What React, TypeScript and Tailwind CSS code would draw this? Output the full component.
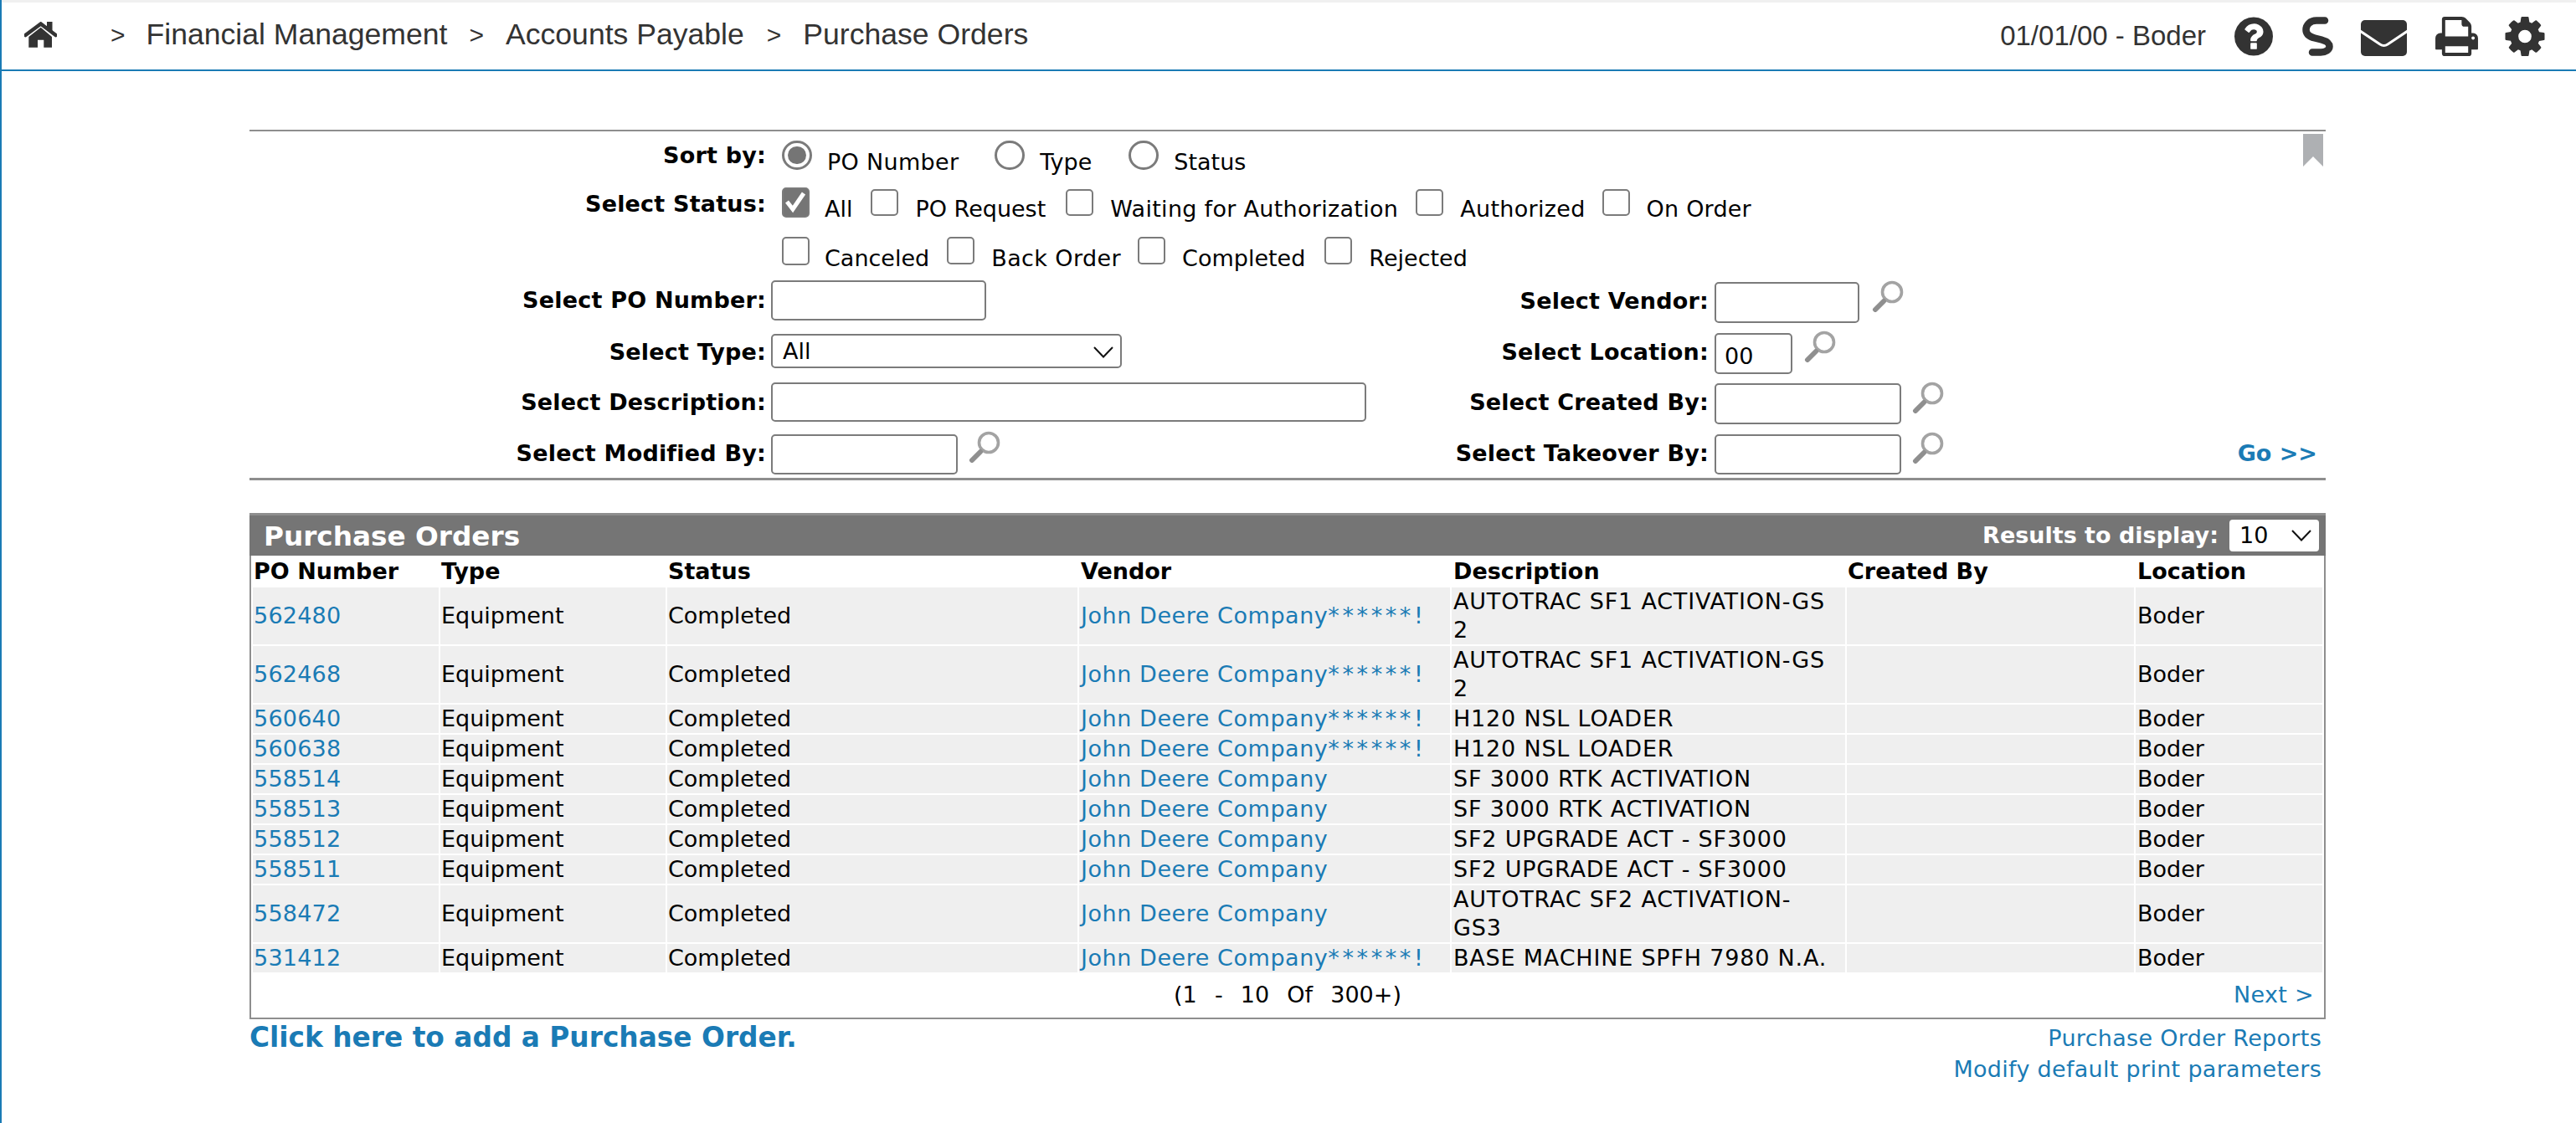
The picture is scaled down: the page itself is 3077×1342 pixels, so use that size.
import React from "react";

const HomeIcon = () => (
  <svg width="39" height="31" viewBox="0 0 39 31" fill="#333">
    <rect x="27" y="0" width="6.5" height="11" />
    <path d="M1.5 16 L19.7 2.5 L37.5 16" fill="none" stroke="#333" strokeWidth="4.5" strokeLinecap="round" />
    <path d="M19.7 6.7 L33 18 V30.7 H23.3 V21.7 H16 V30.7 H5.3 V18 Z" />
  </svg>
);
const QuestionIcon = () => (
  <svg width="46" height="47" viewBox="128 128 1536 1536" fill="#333">
    <path d="M1024 1376v-192q0-14-9-23t-23-9h-192q-14 0-23 9t-9 23v192q0 14 9 23t23 9h192q14 0 23-9t9-23zm256-672q0-88-55.5-163t-138.5-116-170-41q-243 0-371 213-15 24 8 42l132 100q7 6 19 6 16 0 25-12 53-68 86-92 34-24 86-24 48 0 85.5 26t37.5 59q0 38-20 61t-68 45q-63 28-115.5 86.5t-52.5 125.5v36q0 14 9 23t23 9h192q14 0 23-9t9-23q0-19 21.5-49.5t54.5-49.5q32-18 49-28.5t46-35 44.5-48 28-60.5 12.5-81zm384 192q0 209-103 385.5t-279.5 279.5-385.5 103-385.5-103-279.5-279.5-103-385.5 103-385.5 279.5-279.5 385.5-103 385.5 103 279.5 279.5 103 385.5z" />
  </svg>
);
const SIcon = () => (
  <svg width="37" height="47" viewBox="0 0 37 47" fill="none">
    <path d="M27 4.5 H17 C9 4.5 4.5 10 4.5 15.5 C4.5 21 9 24 15 25.5 L23 27.5 C28.5 29 32.5 31.5 32.5 35.5 C32.5 39.5 28 42.5 22 42.5 H12" stroke="#333" strokeWidth="8.5" strokeLinecap="round" />
  </svg>
);
const MailIcon = () => (
  <svg width="55" height="43" viewBox="0 0 55 43">
    <rect width="55" height="43" rx="5" fill="#333" />
    <path d="M-1 13 L23 29 Q27.5 32 32 29 L56 13" fill="none" stroke="#fff" strokeWidth="3" />
  </svg>
);
const PrintIcon = () => (
  <svg width="51" height="47" viewBox="64 128 1664 1536" fill="#333">
    <path d="M448 1536h896v-256h-896v256zm0-640h896v-384h-160q-40 0-68-28t-28-68v-160h-640v640zm1152 64q0-26-19-45t-45-19-45 19-19 45 19 45 45 19 45-19 19-45zm128 0v416q0 13-9.5 22.5t-22.5 9.5h-224v160q0 40-28 68t-68 28h-960q-40 0-68-28t-28-68v-160h-224q-13 0-22.5-9.5t-9.5-22.5v-416q0-79 56.5-135.5t135.5-56.5h64v-544q0-40 28-68t68-28h672q40 0 88 20t76 48l152 152q28 28 48 76t20 88v256h64q79 0 135.5 56.5t56.5 135.5z" />
  </svg>
);
const CogIcon = () => (
  <svg width="48" height="47" viewBox="128 128 1536 1536" fill="#333">
    <path d="M1152 896q0-106-75-181t-181-75-181 75-75 181 75 181 181 75 181-75 75-181zm512-109v222q0 12-8 23t-20 13l-185 28q-19 54-39 91 35 50 107 138 10 12 10 25t-9 23q-27 37-99 108t-94 71q-12 0-26-9l-138-108q-44 23-91 38-16 136-29 186-7 28-36 28h-222q-14 0-24.5-8.5t-11.5-21.5l-28-184q-49-16-90-37l-141 107q-10 9-25 9-14 0-25-11-126-114-165-168-7-10-7-23 0-12 8-23 15-21 51-66.5t54-70.5q-27-50-41-99l-183-27q-13-2-21-12.5t-8-23.5v-222q0-12 8-23t19-13l186-28q14-46 39-92-40-57-107-138-10-12-10-24 0-10 9-23 26-36 98.5-107.5t94.5-71.5q13 0 26 10l138 107q44-23 91-38 16-136 29-186 7-28 36-28h222q14 0 24.5 8.5t11.5 21.5l28 184q49 16 90 37l142-107q9-9 24-9 13 0 25 10 129 119 165 170 7 8 7 22 0 12-8 23-15 21-51 66.5t-54 70.5q26 50 41 98l183 28q13 2 21 12.5t8 23.5z" />
  </svg>
);
const SearchIcon = ({ className }: { className: string }) => (
  <svg width="38" height="38" viewBox="0 0 38 38" fill="none" className={`shrink-0 ${className}`}>
    <circle cx="24" cy="14" r="11.5" stroke="#a3a3a3" strokeWidth="3.6" />
    <path d="M14 25 L4 35" stroke="#8f8f8f" strokeWidth="6" strokeLinecap="round" />
  </svg>
);
const Chevron = ({ className }: { className: string }) => (
  <svg width="24" height="14" viewBox="0 0 24 14" fill="none" className={`absolute pointer-events-none ${className}`}>
    <path d="M1 1 L12 12.5 L23 1" stroke="#111" strokeWidth="2" />
  </svg>
);
const Bookmark = () => (
  <svg width="24" height="39" viewBox="0 0 24 39" className="absolute right-[3px] top-[3px]">
    <polygon points="0,0 24,0 24,39 12,27 0,39" fill="#aeb0b3" />
  </svg>
);

const inputCls = "block bg-white border-2 border-[#7b7b7b] rounded-[5px] px-[10px] outline-none shrink-0";

const Radio = ({ checked }: { checked?: boolean }) => (
  <span className="relative block w-[36px] h-[35px] shrink-0">
    <input type="radio" name="sort" defaultChecked={checked} className="block m-0 w-[36px] h-[35px] appearance-none rounded-full border-[3px] border-[#7b7b7b] bg-white" />
    {checked ? <span className="absolute left-[7px] top-[7px] w-[22px] h-[21px] rounded-full bg-[#757575]" /> : null}
  </span>
);
const Check = ({ checked, box }: { checked?: boolean; box: string }) => (
  <span className={`relative block shrink-0 ${box}`}>
    <input type="checkbox" defaultChecked={checked} className={`block m-0 w-full h-full appearance-none rounded-[5px] border-2 border-[#7b7b7b] ${checked ? "bg-[#757575]" : "bg-white"}`} />
    {checked ? (
      <svg viewBox="0 0 33 36" className="absolute inset-0 w-full h-full" fill="none">
        <path d="M6 17 L13 26 L26 7" stroke="#fff" strokeWidth="5" />
      </svg>
    ) : null}
  </span>
);
const Opt = ({ children, label, gap, first, track = "" }: { children: React.ReactNode; label: string; gap: string; first?: boolean; track?: string }) => (
  <label className={`flex items-start ${gap}`}>
    {children}
    <span className={`leading-[36px] pt-[8px] ${first ? "pl-[18px]" : "pl-[20px]"} ${track}`}>{label}</span>
  </label>
);

const rows = [
  ["562480", "John Deere Company", "******!", "AUTOTRAC SF1 ACTIVATION-GS 2"],
  ["562468", "John Deere Company", "******!", "AUTOTRAC SF1 ACTIVATION-GS 2"],
  ["560640", "John Deere Company", "******!", "H120 NSL LOADER"],
  ["560638", "John Deere Company", "******!", "H120 NSL LOADER"],
  ["558514", "John Deere Company", "", "SF 3000 RTK ACTIVATION"],
  ["558513", "John Deere Company", "", "SF 3000 RTK ACTIVATION"],
  ["558512", "John Deere Company", "", "SF2 UPGRADE ACT - SF3000"],
  ["558511", "John Deere Company", "", "SF2 UPGRADE ACT - SF3000"],
  ["558472", "John Deere Company", "", "AUTOTRAC SF2 ACTIVATION-GS3"],
  ["531412", "John Deere Company", "******!", "BASE MACHINE SPFH 7980 N.A."],
];

const cols = ["w-[222px]", "w-[269px]", "w-[490px]", "w-[443px]", "w-[470px]", "w-[343px]", "w-[223px]"];
const heads = ["PO Number", "Type", "Status", "Vendor", "Description", "Created By", "Location"];
const link = "text-[#1a7bb5]";
const td = "bg-[#efefef] p-0 align-middle font-normal";
const lbl = "font-bold text-right leading-[48px] tracking-[0.2px]";

export default function App() {
  return (
    <div className="min-h-[1342px] border-l-2 border-[#1a7bb5] bg-white text-black text-[27px] overflow-hidden font-[DejaVu_Sans,sans-serif]">
      <header className="h-[85px] -ml-[2px] border-t-[3px] border-t-[#f0f0f0] border-b-2 border-b-[#1a7bb5] flex items-center text-[#333] font-[Liberation_Sans,sans-serif]">
        <div className="ml-[29px] mb-[3px]"><HomeIcon /></div>
        <nav className="flex items-center text-[35.6px] ml-[64px] mb-[3px]">
          <span className="text-[30px]">&gt;</span>
          <span className="ml-[25px]">Financial Management</span>
          <span className="ml-[26px] text-[30px]">&gt;</span>
          <span className="ml-[26px]">Accounts Payable</span>
          <span className="ml-[27px] text-[30px]">&gt;</span>
          <span className="ml-[26px]">Purchase Orders</span>
        </nav>
        <div className="ml-auto flex items-center pr-[37px]">
          <span className="text-[33px] mr-[34px]">01/01/00 - Boder</span>
          <QuestionIcon />
          <div className="ml-[35px]"><SIcon /></div>
          <div className="ml-[33px] mt-[4px]"><MailIcon /></div>
          <div className="ml-[34px]"><PrintIcon /></div>
          <div className="ml-[32px]"><CogIcon /></div>
        </div>
      </header>

      <main className="ml-[296px] w-[2480px] mt-[70px]">
        <section className="relative border-t-2 border-b-[3px] border-[#8e8e8e]">
          <Bookmark />
          <div className="flex items-start mt-[11px] h-[35px]">
            <div className="w-[617px] font-bold text-right leading-[36px] tracking-[0.2px]">Sort by:</div>
            <div className="flex items-start ml-[19px]">
              <Opt label="PO Number" track="tracking-[0.3px]" first gap="mr-[43px]"><Radio checked /></Opt>
              <Opt label="Type" first gap="mr-[44px]"><Radio /></Opt>
              <Opt label="Status" first gap=""><Radio /></Opt>
            </div>
          </div>
          <div className="flex items-start mt-[21px] h-[36px]">
            <div className="w-[617px] font-bold text-right leading-[36px] pt-[2px] tracking-[0.2px]">Select Status:</div>
            <div className="flex items-start ml-[19px]">
              <Opt label="All" first gap="mr-[22px]"><Check checked box="w-[33px] h-[36px]" /></Opt>
              <Opt label="PO Request" gap="mr-[24px]"><Check box="w-[33px] h-[32px] mt-[2px]" /></Opt>
              <Opt label="Waiting for Authorization" track="tracking-[0.3px]" gap="mr-[21px]"><Check box="w-[33px] h-[32px] mt-[2px]" /></Opt>
              <Opt label="Authorized" track="tracking-[0.3px]" gap="mr-[20px]"><Check box="w-[33px] h-[32px] mt-[2px]" /></Opt>
              <Opt label="On Order" track="tracking-[0.2px]" gap=""><Check box="w-[33px] h-[32px] mt-[2px]" /></Opt>
            </div>
          </div>
          <div className="flex items-start mt-[23px] h-[34px] pl-[636px]">
            <Opt label="Canceled" first gap="mr-[21px]"><Check box="w-[33px] h-[34px]" /></Opt>
            <Opt label="Back Order" track="tracking-[0.4px]" gap="mr-[20px]"><Check box="w-[33px] h-[33px]" /></Opt>
            <Opt label="Completed" gap="mr-[23px]"><Check box="w-[33px] h-[33px]" /></Opt>
            <Opt label="Rejected" gap=""><Check box="w-[33px] h-[33px]" /></Opt>
          </div>

          <div className="grid grid-cols-[1433px_1fr] grid-rows-[61px_61px_61px_53px] mt-[18px]">
            <div className="flex items-start">
              <div className={`w-[617px] ${lbl}`}>Select PO Number:</div>
              <input type="text" className={`${inputCls} ml-[6px] w-[257px] h-[48px]`} />
            </div>
            <div className="flex items-start">
              <div className={`w-[310px] ${lbl} pt-[1px]`}>Select Vendor:</div>
              <input type="text" className={`${inputCls} ml-[7px] mt-[2px] w-[173px] h-[49px]`} />
              <SearchIcon className="ml-[15px]" />
            </div>

            <div className="flex items-start">
              <div className={`w-[617px] ${lbl} pt-[1px]`}>Select Type:</div>
              <div className="relative ml-[6px] mt-[3px]">
                <select defaultValue="All" className="block appearance-none bg-white border-2 border-[#7b7b7b] rounded-[5px] pl-[12px] w-[419px] h-[41px] leading-[37px] outline-none">
                  <option>All</option>
                </select>
                <Chevron className="right-[10px] top-[15px]" />
              </div>
            </div>
            <div className="flex items-start">
              <div className={`w-[310px] ${lbl} pt-[1px]`}>Select Location:</div>
              <input type="text" defaultValue="00" className={`${inputCls} ml-[7px] mt-[2px] w-[93px] h-[49px] pt-[5px]`} />
              <SearchIcon className="ml-[14px] -mt-[1px]" />
            </div>

            <div className="flex items-start">
              <div className={`w-[617px] ${lbl}`}>Select Description:</div>
              <input type="text" className={`${inputCls} ml-[6px] w-[711px] h-[47px]`} />
            </div>
            <div className="flex items-start">
              <div className={`w-[310px] ${lbl}`}>Select Created By:</div>
              <input type="text" className={`${inputCls} ml-[7px] mt-[1px] w-[223px] h-[49px]`} />
              <SearchIcon className="ml-[13px] -mt-[1px]" />
            </div>

            <div className="flex items-start">
              <div className={`w-[617px] ${lbl}`}>Select Modified By:</div>
              <input type="text" className={`${inputCls} ml-[6px] mt-[1px] w-[223px] h-[48px]`} />
              <SearchIcon className="ml-[13px] -mt-[3px]" />
            </div>
            <div className="flex items-start">
              <div className={`w-[310px] ${lbl}`}>Select Takeover By:</div>
              <input type="text" className={`${inputCls} ml-[7px] mt-[1px] w-[223px] h-[48px]`} />
              <SearchIcon className="ml-[13px] -mt-[2px]" />
              <a className={`ml-auto mr-[10px] font-bold leading-[48px] ${link}`}>Go &gt;&gt;</a>
            </div>
          </div>
        </section>

        <section className="mt-[39px] border-x-2 border-b-2 border-[#8e8e8e]">
          <div className="h-[51px] -mx-[2px] border-t-[3px] border-[#8e8e8e] bg-[#757575] text-white flex items-center font-bold pl-[17px] pr-[8px]">
            <span className="text-[32.7px] pt-[3px]">Purchase Orders</span>
            <span className="ml-auto">Results to display:</span>
            <div className="relative ml-[13px]">
              <select defaultValue="10" className="block appearance-none bg-white text-black font-normal rounded-[4px] pl-[12px] w-[107px] h-[38px] leading-[38px] outline-none">
                <option>10</option>
              </select>
              <Chevron className="right-[9px] top-[12px]" />
            </div>
          </div>
          <table className="table-fixed border-separate border-spacing-[2px] w-[2476px] leading-[34px]">
            <colgroup>{cols.map((c) => <col key={c} className={c} />)}</colgroup>
            <thead>
              <tr className="h-[34px]">
                {heads.map((h, i) => <th key={h} className={`p-0 text-left font-bold ${i < 3 || i === 5 ? "pl-[1px]" : "pl-[2px]"}`}>{h}</th>)}
              </tr>
            </thead>
            <tbody>
              {rows.map((r) => (
                <tr key={r[0]} className="h-[34px]">
                  <td className={`${td} pl-[1px] ${link} tracking-[0.2px]`}>{r[0]}</td>
                  <td className={`${td} pl-[1px]`}>Equipment</td>
                  <td className={`${td} pl-[1px]`}>Completed</td>
                  <td className={`${td} pl-[2px] ${link} tracking-[0.55px]`}>
                    {r[1]}
                    {r[2] ? <span className="tracking-[3.6px]">{r[2]}</span> : null}
                  </td>
                  <td className={`${td} pl-[2px] pr-[10px] tracking-[0.8px]`}>{r[3]}</td>
                  <td className={td}></td>
                  <td className={`${td} pl-[2px]`}>Boder</td>
                </tr>
              ))}
            </tbody>
          </table>
          <div className="h-[52px] pb-[2px] grid grid-cols-[1fr_auto_1fr] items-center">
            <span></span>
            <span className="whitespace-pre [word-spacing:2px]">(1  -  10  Of  300+)</span>
            <a className={`justify-self-end mr-[12px] tracking-[0.3px] ${link}`}>Next &gt;</a>
          </div>
        </section>

        <footer className="flex justify-between items-start pt-[4px]">
          <a className={`font-bold text-[32.8px] leading-[36px] ${link}`}>Click here to add a Purchase Order.</a>
          <div className={`text-right pr-[5px] leading-[37px] tracking-[0.3px] ${link}`}>
            <div>Purchase Order Reports</div>
            <div>Modify default print parameters</div>
          </div>
        </footer>
      </main>
    </div>
  );
}
